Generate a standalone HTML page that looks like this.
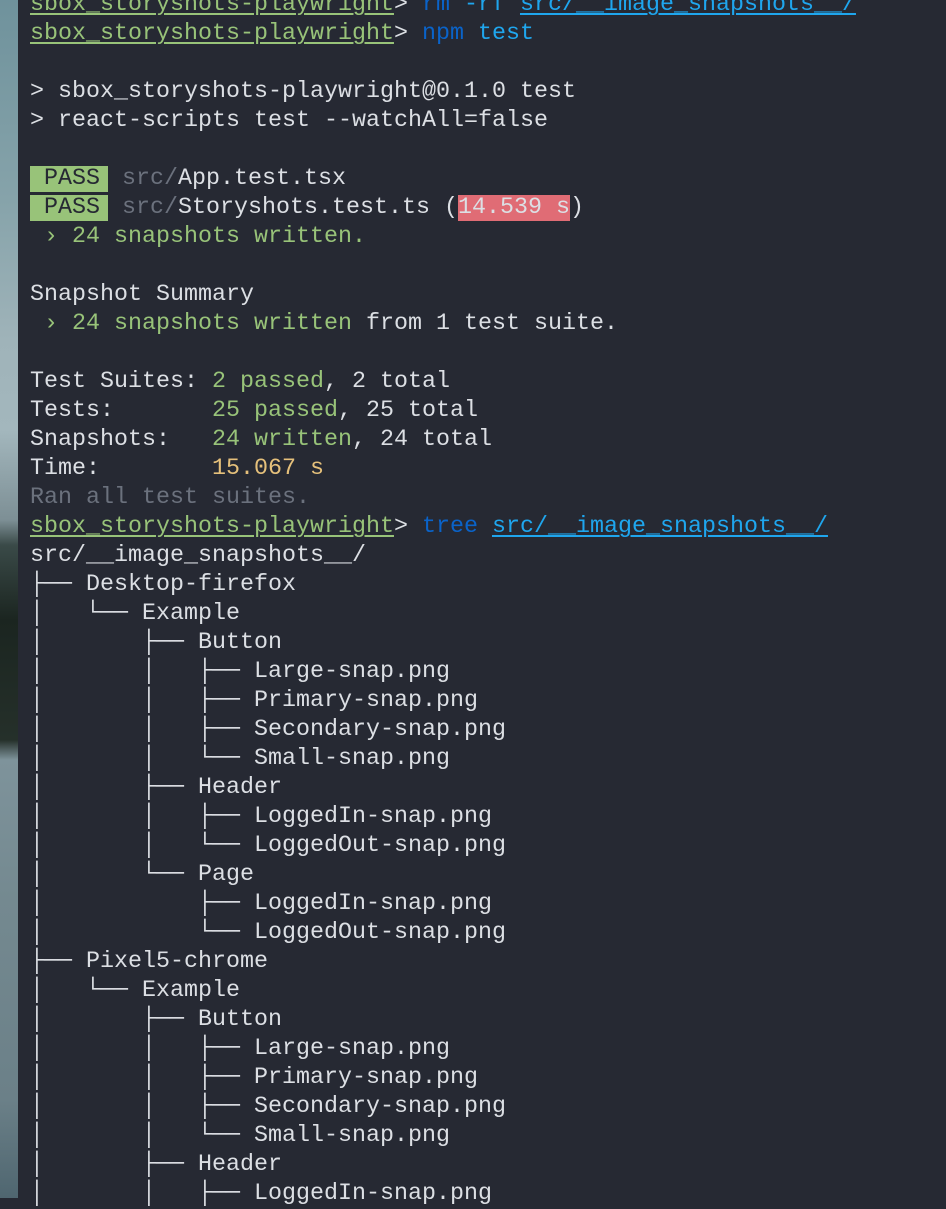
<!DOCTYPE html>
<html><head><meta charset="utf-8"><style>
html,body{margin:0;padding:0;width:946px;height:1198px;overflow:hidden;background:#262933}
.strip{position:absolute;left:0;top:0;width:18px;height:1198px;background:linear-gradient(to bottom,#6f929c 0,#86a3aa 200px,#9fb3b9 340px,#a3b7bd 430px,#7d8f95 520px,#3a4a48 545px,#1b2520 620px,#25302a 740px,#7e939b 760px,#748990 900px,#6b8088 1100px,#4f6670 1198px)}
.term{position:absolute;left:18px;top:0;right:0;bottom:0;background:#262933}
pre{position:absolute;left:30px;top:-9px;margin:0;font-family:"Liberation Mono","DejaVu Sans Mono",monospace;font-size:23.33px;line-height:29px;color:#dcdfe4;white-space:pre}
.g{color:#98c379}.u{text-decoration:underline;text-decoration-thickness:2px;text-underline-offset:3px}
.b{color:#0a63c9}.c{color:#1fa6ee}.d{color:#6b717d}.y{color:#e5c07b}
.pass{background:#98c379;color:#262933;padding:0 8px 0 0}
.red{background:#e06c75;color:#dcdfe4}
</style></head><body>
<div class="strip"></div><div class="term"></div>
<pre><span class="g u">sbox_storyshots-playwright</span>&gt; <span class="b">rm</span> <span class="c">-rf</span> <span class="c u">src/__image_snapshots__/</span>
<span class="g u">sbox_storyshots-playwright</span>&gt; <span class="b">npm</span> <span class="c">test</span>

&gt; sbox_storyshots-playwright@0.1.0 test
&gt; react-scripts test --watchAll=false

<span class="pass"> PASS</span> <span class="d">src/</span>App.test.tsx
<span class="pass"> PASS</span> <span class="d">src/</span>Storyshots.test.ts (<span class="red">14.539 s</span>)
<span class="g"> › 24 snapshots written.</span>

Snapshot Summary
<span class="g"> › 24 snapshots written</span> from 1 test suite.

Test Suites: <span class="g">2 passed</span>, 2 total
Tests:       <span class="g">25 passed</span>, 25 total
Snapshots:   <span class="g">24 written</span>, 24 total
Time:        <span class="y">15.067 s</span>
<span class="d">Ran all test suites.</span>
<span class="g u">sbox_storyshots-playwright</span>&gt; <span class="b">tree</span> <span class="c u">src/__image_snapshots__/</span>
src/__image_snapshots__/
├── Desktop-firefox
│   └── Example
│       ├── Button
│       │   ├── Large-snap.png
│       │   ├── Primary-snap.png
│       │   ├── Secondary-snap.png
│       │   └── Small-snap.png
│       ├── Header
│       │   ├── LoggedIn-snap.png
│       │   └── LoggedOut-snap.png
│       └── Page
│           ├── LoggedIn-snap.png
│           └── LoggedOut-snap.png
├── Pixel5-chrome
│   └── Example
│       ├── Button
│       │   ├── Large-snap.png
│       │   ├── Primary-snap.png
│       │   ├── Secondary-snap.png
│       │   └── Small-snap.png
│       ├── Header
│       │   ├── LoggedIn-snap.png
</pre>
</body></html>
